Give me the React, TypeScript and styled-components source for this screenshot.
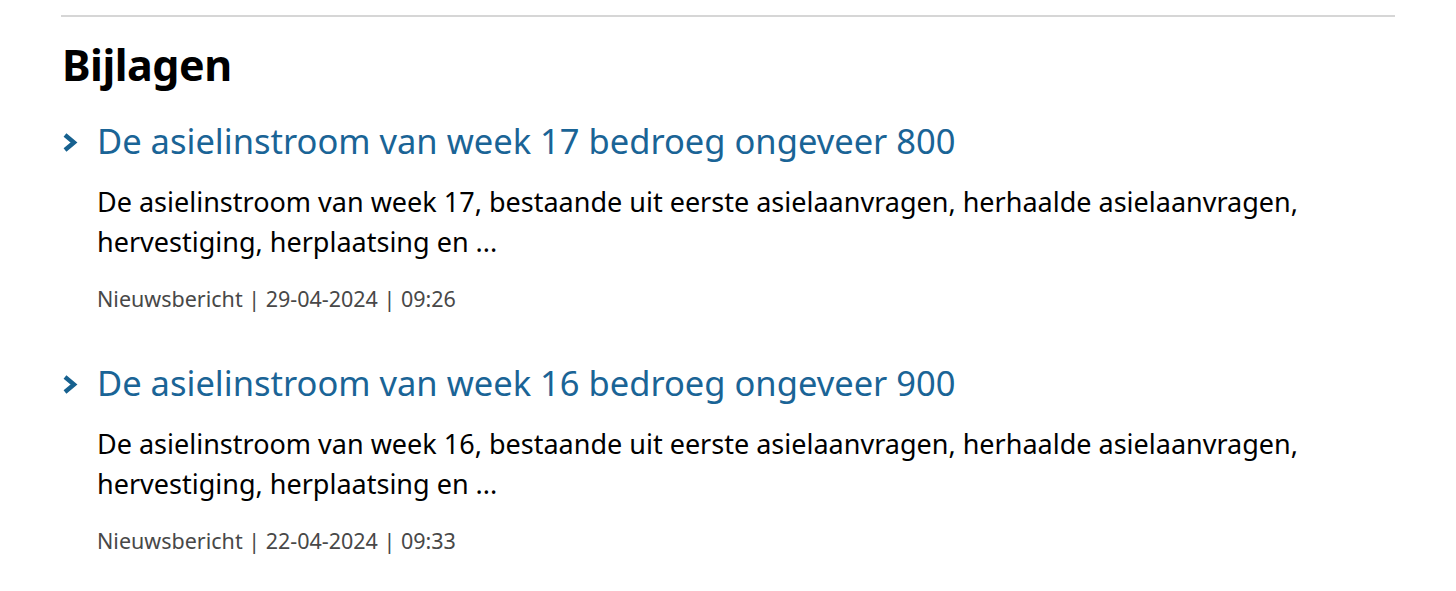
import React from 'react'
import styled, { createGlobalStyle } from 'styled-components'

const GlobalStyle = createGlobalStyle`
  body {
    margin: 0;
    background: #fff;
    font-family: "Noto Sans", "Open Sans", sans-serif;
    color: #000;
  }
`

const Page = styled.div`
  padding: 15px 61px 0 61px;
`

const Rule = styled.hr`
  margin: 0;
  border: 0;
  border-top: 2px solid #d6d6d6;
`

const Heading = styled.h2`
  margin: 22px 0 0 1px;
  font-size: 43px;
  line-height: 52px;
  font-weight: 700;
  letter-spacing: -0.5px;
`

const List = styled.ul`
  list-style: none;
  margin: 29px 0 0 0;
  padding: 0;
  display: flex;
  flex-direction: column;
  gap: 49px;
`

const Item = styled.li`
  display: grid;
  grid-template-columns: 36px 1fr;
`

const Chevron = styled.svg`
  margin-top: 12px;
  width: 17px;
  height: 21px;
`

const Title = styled.a`
  display: block;
  color: #1a6496;
  font-size: 34.5px;
  line-height: 42px;
  text-decoration: none;
`

const Summary = styled.p`
  margin: 20px 0 0 0;
  font-size: 27px;
  line-height: 40px;
`

const Meta = styled.p`
  margin: 23px 0 0 0;
  font-size: 21.5px;
  line-height: 28px;
  color: #484848;
`

const items = [
  {
    title: 'De asielinstroom van week 17 bedroeg ongeveer 800',
    text: 'De asielinstroom van week 17, bestaande uit eerste asielaanvragen, herhaalde asielaanvragen, hervestiging, herplaatsing en ...',
    meta: 'Nieuwsbericht | 29-04-2024 | 09:26',
  },
  {
    title: 'De asielinstroom van week 16 bedroeg ongeveer 900',
    text: 'De asielinstroom van week 16, bestaande uit eerste asielaanvragen, herhaalde asielaanvragen, hervestiging, herplaatsing en ...',
    meta: 'Nieuwsbericht | 22-04-2024 | 09:33',
  },
]

const App = () => (
  <Page>
    <GlobalStyle />
    <Rule />
    <Heading>Bijlagen</Heading>
    <List>
      {items.map((item) => (
        <Item key={item.title}>
          <Chevron viewBox="0 0 17 21">
            <polyline points="4,3 13,10.5 4,18" fill="none" stroke="#17618f" strokeWidth="4.4" />
          </Chevron>
          <div>
            <Title href="#">{item.title}</Title>
            <Summary>{item.text}</Summary>
            <Meta>{item.meta}</Meta>
          </div>
        </Item>
      ))}
    </List>
  </Page>
)

export default App
